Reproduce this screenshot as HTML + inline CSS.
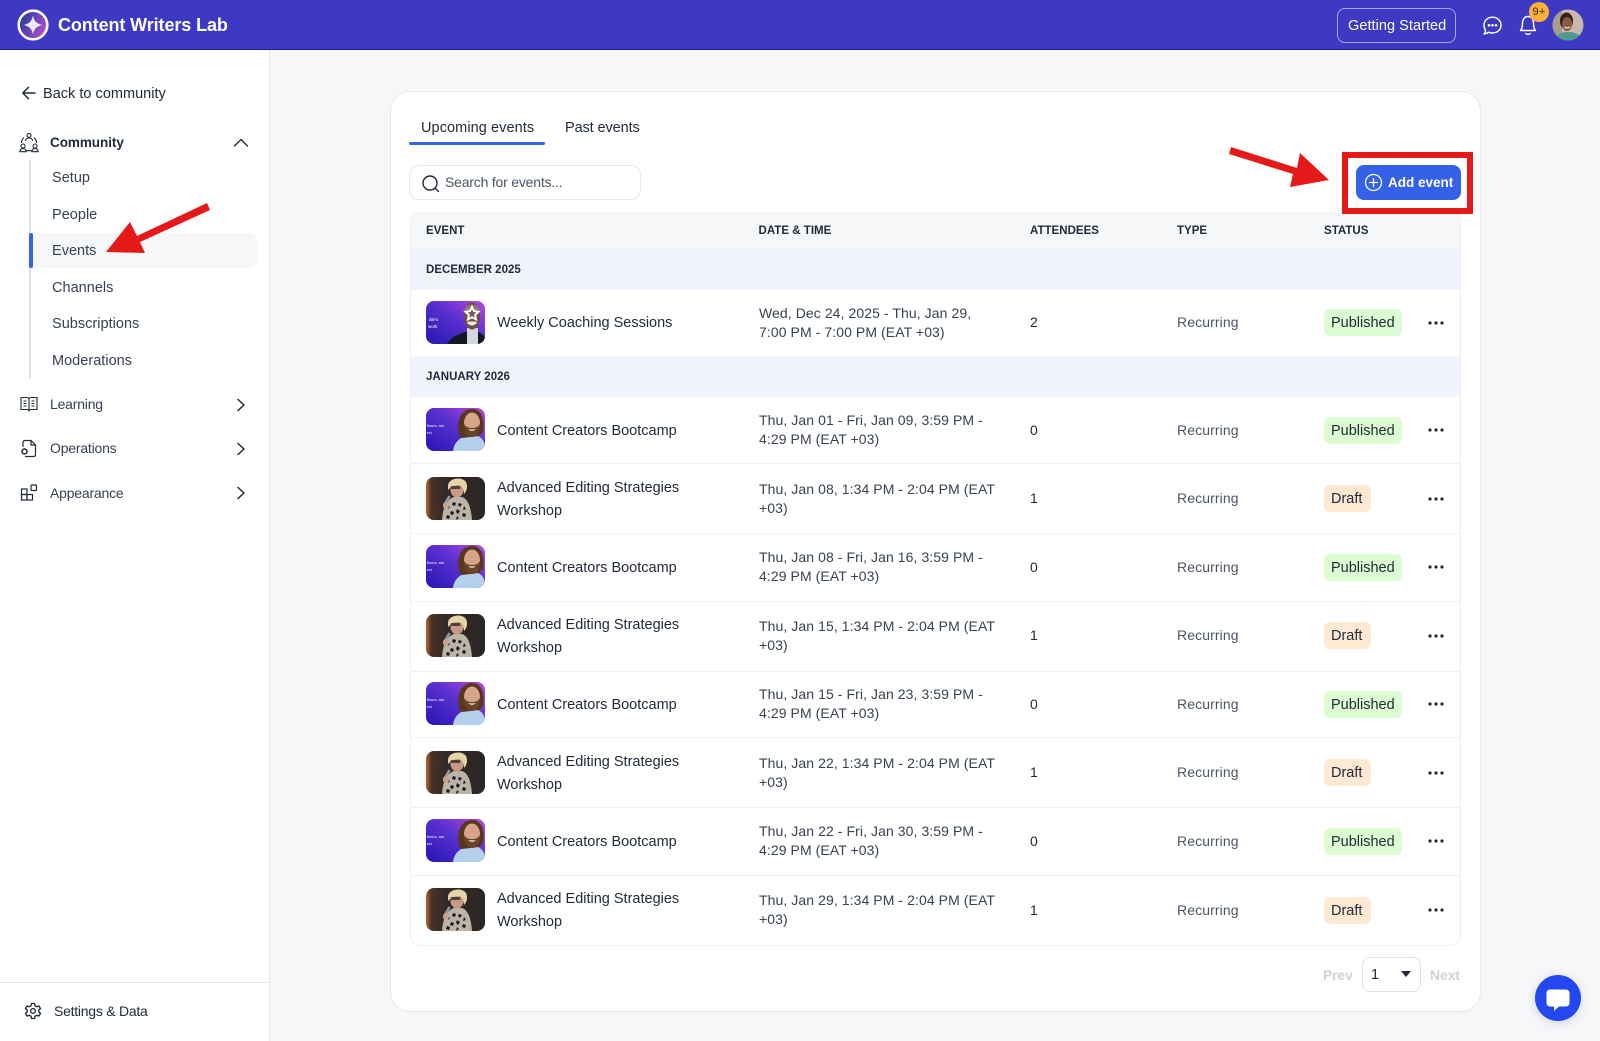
<!DOCTYPE html>
<html><head><meta charset="utf-8"><title>Events</title>
<style>
html,body{margin:0;padding:0;width:1600px;height:1041px;overflow:hidden;background:#f6f7f9;font-family:"Liberation Sans",Arial,sans-serif;color:#1f2937}
div,svg,span{position:absolute}
.t{white-space:nowrap;line-height:20px;height:20px;font-size:14.5px;letter-spacing:0;-webkit-font-smoothing:antialiased}
.nav{left:52px;color:#374151;letter-spacing:.02px}
.nv2{left:50px;color:#374151;font-size:14px;letter-spacing:-.2px}
.hd{font-size:11.5px;font-weight:bold;color:#1f2937;letter-spacing:.02px}
.c{left:0;width:0;height:0}
.c svg.th{left:426px;top:-22px}
.c .ti{left:497px;color:#1f2937;font-size:14.5px;letter-spacing:0}
.c .d{left:759px;color:#374151;font-size:14px;letter-spacing:.08px}
.c .a{left:1030px;top:-10.5px;color:#1f2937;font-size:14px}
.c .y{left:1177px;top:-10.5px;color:#4b5563;font-size:14px;letter-spacing:.1px}
.b{left:1324px;top:-13.5px;height:27px;border-radius:6px;line-height:29px;padding:0 7px;white-space:nowrap;font-size:14.5px;letter-spacing:0;color:#1f2937}
.p{width:64px;background:#dcfdd2}
.f{width:33px;background:#ffe9d3}
.dots{left:1428px;top:-2px;width:16px;height:4px}
.l{left:411px;width:1049px;height:1px;background:#eff0f2}
.g{left:411px;width:1049px;background:#f1f4fe}
</style></head><body>
<svg width="0" height="0" style="left:0;top:0">
<defs>
<linearGradient id="pg" x1="0" y1="1" x2="1" y2="0"><stop offset="0" stop-color="#2416b4"/><stop offset=".55" stop-color="#5a30cf"/><stop offset="1" stop-color="#b84ade"/></linearGradient>
<linearGradient id="lg" x1="0" y1=".2" x2="1" y2=".7"><stop offset="0" stop-color="#1d3a9c"/><stop offset="1" stop-color="#b650c8"/></linearGradient>
<linearGradient id="dk" x1="0" y1="0" x2="1" y2="0"><stop offset="0" stop-color="#b5682f"/><stop offset=".09" stop-color="#4a3226"/><stop offset=".3" stop-color="#352b27"/><stop offset="1" stop-color="#2a2523"/></linearGradient>
<clipPath id="cp"><rect width="59" height="43" rx="8"/></clipPath>
<symbol id="wk" viewBox="0 0 59 43"><g clip-path="url(#cp)"><rect width="59" height="43" fill="url(#pg)"/><path d="M21 43 C24 36 33 33 39 31 L53 31 C56 33 59 35 59 38 V43Z" fill="#141728"/><path d="M41 43 V27 H52 V43Z" fill="#cfd8df"/><ellipse cx="46" cy="15" rx="8" ry="13.500" fill="#6f4f41"/><path d="M38 11 C39 1 53 1 54 11 Z" fill="#8c7a70"/><path d="M41 22 Q46 27 51 22 L50 20.500 H42Z" fill="#f1e8e0"/><path d="M46 6l2 4.100 4.500.7-3.300 3.100.8 4.500-4-2.100-4 2.100.8-4.500-3.300-3.100 4.500-.7z" fill="#7a5a4a" stroke="#fff" stroke-width="2"/><text x="3" y="20" font-size="4.500" fill="#fff" font-family="Liberation Sans">ale's</text><text x="2" y="27" font-size="4.500" fill="#fff" font-family="Liberation Sans">work</text></g></symbol>
<symbol id="cr" viewBox="0 0 59 43"><g clip-path="url(#cp)"><rect width="59" height="43" fill="url(#pg)"/><path d="M27 43 C28 34 34 30 40 28 H52 C56 30 58 33 59 37 V43Z" fill="#b5d0ec"/><path d="M33 27 C30 12 35 1 46 1 C56 1 59 12 57 24 L53 28 L36 30Z" fill="#573720"/><ellipse cx="46" cy="15" rx="8" ry="10.500" fill="#d6a488"/><path d="M38 16 C38 26 42 29 46 29 C50 29 54 26 54 16 C52 19 50 20 46 20 C42 20 40 19 38 16Z" fill="#6b4427"/><path d="M42 21 Q46 24.500 50 21 Q46 22 42 21Z" fill="#fff"/><text x="1" y="19" font-size="4.300" fill="#fff" font-family="Liberation Serif">hours, not</text><text x="1" y="26" font-size="4.300" fill="#fff" font-family="Liberation Serif">est</text></g></symbol>
<symbol id="ed" viewBox="0 0 59 43"><g clip-path="url(#cp)"><rect width="59" height="43" fill="url(#dk)"/><path d="M16 43 C17 28 22 22 28 20 H36 C42 22 45 30 46 43Z" fill="#bab4a9"/><path d="M22 28l2 2-2 2zM27 25l3 1-1 3-3-1zM33 26l3 1-2 3-2-2zM38 29l2 3-3 1zM25 34l3 1-1 3-3-1zM31 32l3 2-2 3-2-2zM37 36l3 1-1 3-3-1zM21 38l3 1-1 3-3-1zM31 39l2 2-3 2z" fill="#1f1b1a"/><ellipse cx="31" cy="13" rx="6.500" ry="7.500" fill="#c69a84"/><path d="M22 9 C22 1 36 -1 40 5 C42 9 41 14 38 17 C38 12 36 8 32 8 C28 8 25 10 22 13Z" fill="#e6d4a8"/><rect x="24.500" y="9" width="10" height="3" rx="1.500" fill="#2a2020" opacity=".75"/><path d="M19 27 L23 20" stroke="#9298a0" stroke-width="2.600" stroke-linecap="round"/><rect x="17" y="25" width="6" height="7" rx="3" fill="#c9a48c"/></g></symbol>
<symbol id="dt" viewBox="0 0 16 4"><circle cx="2" cy="2" r="1.600" fill="#1f2937"/><circle cx="8" cy="2" r="1.600" fill="#1f2937"/><circle cx="14" cy="2" r="1.600" fill="#1f2937"/></symbol>
<symbol id="ch" viewBox="0 0 10 14"><path d="M2 1.500 L8 7 L2 12.500" fill="none" stroke="#1f2937" stroke-width="1.500" stroke-linecap="round" stroke-linejoin="round"/></symbol>
</defs></svg>

<!-- header -->
<div style="left:0;top:0;width:1600px;height:49px;background:#3d39c3;border-bottom:1px solid #1f1ca8"></div>
<svg style="left:17px;top:9px" width="32" height="32" viewBox="0 0 32 32"><circle cx="16" cy="16" r="14.300" fill="url(#lg)" stroke="#fff" stroke-width="2.600"/><path d="M16 6.500 C17.300 12.500 19.500 14.700 25.500 16 C19.500 17.300 17.300 19.500 16 25.500 C14.700 19.500 12.500 17.300 6.500 16 C12.500 14.700 14.700 12.500 16 6.500Z" fill="#ece8fb"/></svg>
<div class="t" style="left:58px;top:15px;font-size:18px;font-weight:bold;color:#fff;letter-spacing:-.1px">Content Writers Lab</div>
<div style="left:1337px;top:8px;width:117px;height:33px;border:1px solid rgba(255,255,255,.55);border-radius:8px"></div>
<div class="t" style="left:1348px;top:16px;color:#fff;font-size:14.500px;letter-spacing:.05px">Getting Started</div>
<svg style="left:1482px;top:15px" width="21" height="21" viewBox="0 0 21 21" fill="none" stroke="#fff" stroke-width="1.400"><path d="M10.500 2.200 C15.300 2.200 19 5.800 19 10.200 C19 14.700 15.300 18 10.500 18 C9 18 7.600 17.700 6.600 17.200 C5.200 18.300 3.700 18.900 2 18.900 C3.200 17.700 3.600 16.500 3.500 15 C2.500 13.600 2 12 2 10.200 C2 5.800 5.700 2.200 10.500 2.200Z" stroke-linejoin="round"/><circle cx="7" cy="10.300" r=".6" fill="#fff"/><circle cx="10.500" cy="10.300" r=".6" fill="#fff"/><circle cx="14" cy="10.300" r=".6" fill="#fff"/></svg>
<svg style="left:1518px;top:14px" width="20" height="22" viewBox="0 0 20 22" fill="none" stroke="#fff" stroke-width="1.500" stroke-linejoin="round"><path d="M2.500 16.500 C4 15 4.500 13.500 4.500 9.500 C4.500 5 6.800 2.500 10 2.500 C13.200 2.500 15.500 5 15.500 9.500 C15.500 13.500 16 15 17.500 16.500Z"/><path d="M7.800 19.500 C9 20.600 11 20.600 12.200 19.500" stroke-linecap="round"/></svg>
<div style="left:1529px;top:2px;width:20px;height:20px;border-radius:50%;background:#fbb03b;color:#3a2c0c;font-size:11px;line-height:20px;text-align:center;letter-spacing:.2px">9+</div>
<svg style="left:1552px;top:9px" width="32" height="32" viewBox="0 0 32 32"><defs><clipPath id="av"><circle cx="16" cy="16" r="15.500"/></clipPath></defs><g clip-path="url(#av)"><rect width="32" height="32" fill="#c9b8ab"/><rect width="10" height="32" fill="#a89a8e"/><path d="M2 32 C4 25 10 23 16 23 C23 23 28 25 31 32Z" fill="#4d9c8b"/><ellipse cx="14.500" cy="12" rx="6.500" ry="8.500" fill="#33201a"/><ellipse cx="15" cy="15" rx="5" ry="7" fill="#8a5a42"/><path d="M12.500 18 Q15 20 18 18" stroke="#fff" stroke-width="1" fill="none"/></g></svg>

<!-- sidebar -->
<div style="left:0;top:50px;width:269px;height:991px;background:#fff;border-right:1px solid #e7e8ec"></div>
<svg style="left:21px;top:85px" width="16" height="16" viewBox="0 0 16 16" fill="none" stroke="#1f2937" stroke-width="1.400" stroke-linecap="round" stroke-linejoin="round"><path d="M14 8 H2 M7.500 2.200 L1.800 8 L7.500 13.800"/></svg>
<div class="t" style="left:43px;top:84px;letter-spacing:.02px">Back to community</div>

<svg style="left:19px;top:132px" width="20" height="21" viewBox="0 0 20 21" fill="none" stroke="#1f2937" stroke-width="1.100"><circle cx="10" cy="3.400" r="2"/><path d="M6.400 9 C6.600 6.800 8 6 10 6 C12 6 13.400 6.800 13.600 9"/><circle cx="4" cy="14" r="2"/><path d="M.8 19.700 C1 17.400 2.200 16.600 4 16.600 C5.800 16.600 7 17.400 7.200 19.700Z"/><circle cx="16" cy="14" r="2"/><path d="M12.800 19.700 C13 17.400 14.200 16.600 16 16.600 C17.800 16.600 19 17.400 19.200 19.700Z"/><path d="M5 5.500 C3.300 7 2.500 9 2.500 11 M15 5.500 C16.700 7 17.500 9 17.500 11 M7.500 18.700 H12.500"/></svg>
<div class="t" style="left:50px;top:133px;font-weight:bold;font-size:13.500px;letter-spacing:-.05px">Community</div>
<svg style="left:233px;top:137px" width="16" height="11" viewBox="0 0 16 11" fill="none" stroke="#1f2937" stroke-width="1.400" stroke-linecap="round" stroke-linejoin="round"><path d="M1.500 9 L8 2.500 L14.500 9"/></svg>
<div style="left:29px;top:160px;width:2px;height:218px;background:#dfe0e4"></div>
<div style="left:32px;top:233px;width:226px;height:35px;background:#f6f7f9;border-radius:0 9px 9px 0"></div>
<div style="left:28.500px;top:233px;width:4px;height:35px;background:#3563e9;border-radius:2px"></div>
<div class="t nav" style="top:168px">Setup</div>
<div class="t nav" style="top:205px">People</div>
<div class="t nav" style="top:241px">Events</div>
<div class="t nav" style="top:278px">Channels</div>
<div class="t nav" style="top:314px">Subscriptions</div>
<div class="t nav" style="top:351px">Moderations</div>

<svg style="left:20px;top:396px" width="18" height="17" viewBox="0 0 18 17" fill="none" stroke="#1f2937" stroke-width="1.100"><path d="M1 1.500 H7 C8 1.500 9 2.200 9 3.200 C9 2.200 10 1.500 11 1.500 H17 V13.500 H11 C10 13.500 9 14 9 15.500 C9 14 8 13.500 7 13.500 H1Z"/><path d="M9 3 V15 M3.500 5 H6.500 M3.500 7.500 H6.500 M3.500 10 H6.500 M11.500 5 H14.500 M11.500 7.500 H14.500 M11.500 10 H14.500"/></svg>
<div class="t nv2" style="top:394px">Learning</div>
<svg style="left:236px;top:398px" width="10" height="14"><use href="#ch"/></svg>

<svg style="left:20px;top:439px" width="17" height="19" viewBox="0 0 17 19" fill="none" stroke="#1f2937" stroke-width="1.200"><path d="M3 8 V3.500 C3 2.300 3.800 1.500 5 1.500 H11 L15.500 6 V15.500 C15.500 16.700 14.700 17.500 13.500 17.500 H5"/><path d="M11 1.500 V6 H15.500"/><circle cx="4.500" cy="12.500" r="2.500" stroke-width="1.500"/></svg>
<div class="t nv2" style="top:438px">Operations</div>
<svg style="left:236px;top:442px" width="10" height="14"><use href="#ch"/></svg>

<svg style="left:20px;top:484px" width="18" height="17" viewBox="0 0 18 17" fill="none" stroke="#1f2937" stroke-width="1.200"><rect x="1.500" y="5" width="5.500" height="5.500"/><rect x="1.500" y="10.500" width="5.500" height="5.500"/><rect x="7" y="10.500" width="5.500" height="5.500"/><rect x="11" y="1" width="5.500" height="5.500" rx=".8"/></svg>
<div class="t nv2" style="top:482.500px">Appearance</div>
<svg style="left:236px;top:486px" width="10" height="14"><use href="#ch"/></svg>

<div style="left:0;top:982px;width:269px;height:1px;background:#e5e6ea"></div>
<svg style="left:24px;top:1002px" width="18" height="18" viewBox="0 0 24 24" fill="none" stroke="#1f2937" stroke-width="1.800" stroke-linejoin="round"><circle cx="12" cy="12" r="3.200"/><path d="M10 2 H14 L14.600 5 L17 6.300 L19.900 5.300 L22 8.800 L19.700 10.800 V13.200 L22 15.200 L19.900 18.700 L17 17.700 L14.600 19 L14 22 H10 L9.400 19 L7 17.700 L4.100 18.700 L2 15.200 L4.300 13.200 V10.800 L2 8.800 L4.100 5.300 L7 6.300 L9.400 5Z"/></svg>
<div class="t" style="left:54px;top:1001px;font-size:14px;letter-spacing:-.25px">Settings &amp; Data</div>

<!-- card -->
<div style="left:390px;top:91px;width:1089px;height:919px;background:#fff;border:1px solid #e8e9ec;border-radius:20px"></div>

<div class="t" style="left:421px;top:118px;color:#1f2937;letter-spacing:.08px">Upcoming events</div>
<div class="t" style="left:565px;top:118px;color:#1f2937;letter-spacing:-.1px">Past events</div>
<div style="left:409px;top:141.500px;width:136px;height:3px;background:#3563e9;border-radius:2px"></div>

<div style="left:409px;top:165px;width:230px;height:33px;border:1px solid #e6e7ea;border-radius:10px;background:#fff"></div>
<svg style="left:421px;top:175px" width="19" height="18" viewBox="0 0 19 18" fill="none" stroke="#1f2937" stroke-width="1.400" stroke-linecap="round"><circle cx="9" cy="8" r="7"/><path d="M14 13 L17.500 16.500"/></svg>
<div class="t" style="left:445px;top:172px;color:#4b5563;font-size:14px;letter-spacing:-.2px">Search for events...</div>

<!-- table -->
<div style="left:410px;top:212px;width:1049px;height:732px;background:#fff;border:1px solid #eff0f2;border-radius:10px"></div>
<div style="left:411px;top:212px;width:1049px;height:36px;background:#f6f7f9;border-radius:10px 10px 0 0"></div>
<div class="t hd" style="left:426px;top:221px">EVENT</div>
<div class="t hd" style="left:758.500px;top:221px">DATE &amp; TIME</div>
<div class="t hd" style="left:1030px;top:221px">ATTENDEES</div>
<div class="t hd" style="left:1177px;top:221px">TYPE</div>
<div class="t hd" style="left:1324px;top:221px">STATUS</div>

<div class="g" style="top:248px;height:42px"></div>
<div class="t hd" style="left:426px;top:260px">DECEMBER 2025</div>
<div class="g" style="top:356px;height:41px"></div>
<div class="t hd" style="left:426px;top:367px">JANUARY 2026</div>

<div class="l" style="top:463px"></div>
<div class="l" style="top:533px"></div>
<div class="l" style="top:601px"></div>
<div class="l" style="top:671px"></div>
<div class="l" style="top:737px"></div>
<div class="l" style="top:807px"></div>
<div class="l" style="top:875px"></div>

<div class="c" style="top:322.500px"><svg class="th" width="59" height="43"><use href="#wk"/></svg><div class="t ti" style="top:-9.500px">Weekly Coaching Sessions</div><div class="t d" style="top:-20px">Wed, Dec 24, 2025 - Thu, Jan 29,</div><div class="t d" style="top:-1px">7:00 PM - 7:00 PM (EAT +03)</div><div class="t a">2</div><div class="t y">Recurring</div><div class="b p">Published</div><svg class="dots"><use href="#dt"/></svg></div>

<div class="c" style="top:430px"><svg class="th" width="59" height="43"><use href="#cr"/></svg><div class="t ti" style="top:-9.500px">Content Creators Bootcamp</div><div class="t d" style="top:-20px">Thu, Jan 01 - Fri, Jan 09, 3:59 PM -</div><div class="t d" style="top:-1px">4:29 PM (EAT +03)</div><div class="t a">0</div><div class="t y">Recurring</div><div class="b p">Published</div><svg class="dots"><use href="#dt"/></svg></div>

<div class="c" style="top:498.500px"><svg class="th" width="59" height="43"><use href="#ed"/></svg><div class="t ti" style="top:-21px">Advanced Editing Strategies</div><div class="t ti" style="top:2px">Workshop</div><div class="t d" style="top:-20px">Thu, Jan 08, 1:34 PM - 2:04 PM (EAT</div><div class="t d" style="top:-1px">+03)</div><div class="t a">1</div><div class="t y">Recurring</div><div class="b f">Draft</div><svg class="dots"><use href="#dt"/></svg></div>

<div class="c" style="top:567px"><svg class="th" width="59" height="43"><use href="#cr"/></svg><div class="t ti" style="top:-9.500px">Content Creators Bootcamp</div><div class="t d" style="top:-20px">Thu, Jan 08 - Fri, Jan 16, 3:59 PM -</div><div class="t d" style="top:-1px">4:29 PM (EAT +03)</div><div class="t a">0</div><div class="t y">Recurring</div><div class="b p">Published</div><svg class="dots"><use href="#dt"/></svg></div>

<div class="c" style="top:635.500px"><svg class="th" width="59" height="43"><use href="#ed"/></svg><div class="t ti" style="top:-21px">Advanced Editing Strategies</div><div class="t ti" style="top:2px">Workshop</div><div class="t d" style="top:-20px">Thu, Jan 15, 1:34 PM - 2:04 PM (EAT</div><div class="t d" style="top:-1px">+03)</div><div class="t a">1</div><div class="t y">Recurring</div><div class="b f">Draft</div><svg class="dots"><use href="#dt"/></svg></div>

<div class="c" style="top:704px"><svg class="th" width="59" height="43"><use href="#cr"/></svg><div class="t ti" style="top:-9.500px">Content Creators Bootcamp</div><div class="t d" style="top:-20px">Thu, Jan 15 - Fri, Jan 23, 3:59 PM -</div><div class="t d" style="top:-1px">4:29 PM (EAT +03)</div><div class="t a">0</div><div class="t y">Recurring</div><div class="b p">Published</div><svg class="dots"><use href="#dt"/></svg></div>

<div class="c" style="top:772.500px"><svg class="th" width="59" height="43"><use href="#ed"/></svg><div class="t ti" style="top:-21px">Advanced Editing Strategies</div><div class="t ti" style="top:2px">Workshop</div><div class="t d" style="top:-20px">Thu, Jan 22, 1:34 PM - 2:04 PM (EAT</div><div class="t d" style="top:-1px">+03)</div><div class="t a">1</div><div class="t y">Recurring</div><div class="b f">Draft</div><svg class="dots"><use href="#dt"/></svg></div>

<div class="c" style="top:841px"><svg class="th" width="59" height="43"><use href="#cr"/></svg><div class="t ti" style="top:-9.500px">Content Creators Bootcamp</div><div class="t d" style="top:-20px">Thu, Jan 22 - Fri, Jan 30, 3:59 PM -</div><div class="t d" style="top:-1px">4:29 PM (EAT +03)</div><div class="t a">0</div><div class="t y">Recurring</div><div class="b p">Published</div><svg class="dots"><use href="#dt"/></svg></div>

<div class="c" style="top:910px"><svg class="th" width="59" height="43"><use href="#ed"/></svg><div class="t ti" style="top:-21px">Advanced Editing Strategies</div><div class="t ti" style="top:2px">Workshop</div><div class="t d" style="top:-20px">Thu, Jan 29, 1:34 PM - 2:04 PM (EAT</div><div class="t d" style="top:-1px">+03)</div><div class="t a">1</div><div class="t y">Recurring</div><div class="b f">Draft</div><svg class="dots"><use href="#dt"/></svg></div>

<!-- pagination -->
<div class="t" style="left:1323px;top:965px;font-weight:bold;font-size:14px;color:#d1d2d6;letter-spacing:-.2px">Prev</div>
<div style="left:1362px;top:957px;width:57px;height:33px;border:1px solid #e2e3e6;border-radius:8px;background:#fff"></div>
<div class="t" style="left:1371px;top:965px;color:#1f2937">1</div>
<svg style="left:1401px;top:971px" width="10" height="6"><path d="M0 0 H10 L5 6Z" fill="#1f2937"/></svg>
<div class="t" style="left:1430px;top:965px;font-weight:bold;font-size:14px;color:#d1d2d6;letter-spacing:-.1px">Next</div>

<!-- add button + annotation -->
<div style="left:1342px;top:152px;width:119px;height:50px;background:#fff;border:6.500px solid #e61919"></div>
<div style="left:1356px;top:165px;width:105px;height:35px;background:#3561e6;border-radius:8px"></div>
<svg style="left:1364px;top:173px" width="19" height="19" viewBox="0 0 19 19" fill="none" stroke="#fff" stroke-width="1.300" stroke-linecap="round"><circle cx="9.500" cy="9.500" r="8"/><path d="M9.500 5.500 V13.500 M5.500 9.500 H13.500"/></svg>
<div class="t" style="left:1388px;top:173px;color:#fff;font-weight:bold;font-size:13.500px;letter-spacing:0">Add event</div>
<svg style="left:1225px;top:143px" width="110" height="50" viewBox="1225 143 110 50"><path d="M1231 147 L1297 168 L1300 153 L1329 180 L1290 187 L1293 174 L1229 154Z" fill="#e61919"/></svg>
<svg style="left:100px;top:198px" width="115" height="60" viewBox="100 198 115 60"><path d="M106 252 L130 222 L137 236 L207 203 L210 210 L140 242 L145 253Z" fill="#e61919"/></svg>

<!-- chat -->
<div style="left:1535px;top:975px;width:46px;height:46px;border-radius:50%;background:#2347f0;box-shadow:0 2px 10px rgba(40,60,120,.18)"></div>
<svg style="left:1546px;top:989px" width="24" height="24" viewBox="0 0 24 24"><path d="M4 .5 H20 C22 .5 23.500 2 23.500 4 V14 C23.500 16 22 17.500 20 17.500 H13 L8 22 V17.500 H4 C2 17.500 .5 16 .5 14 V4 C.5 2 2 .5 4 .5Z" fill="#fff"/></svg>
</body></html>
